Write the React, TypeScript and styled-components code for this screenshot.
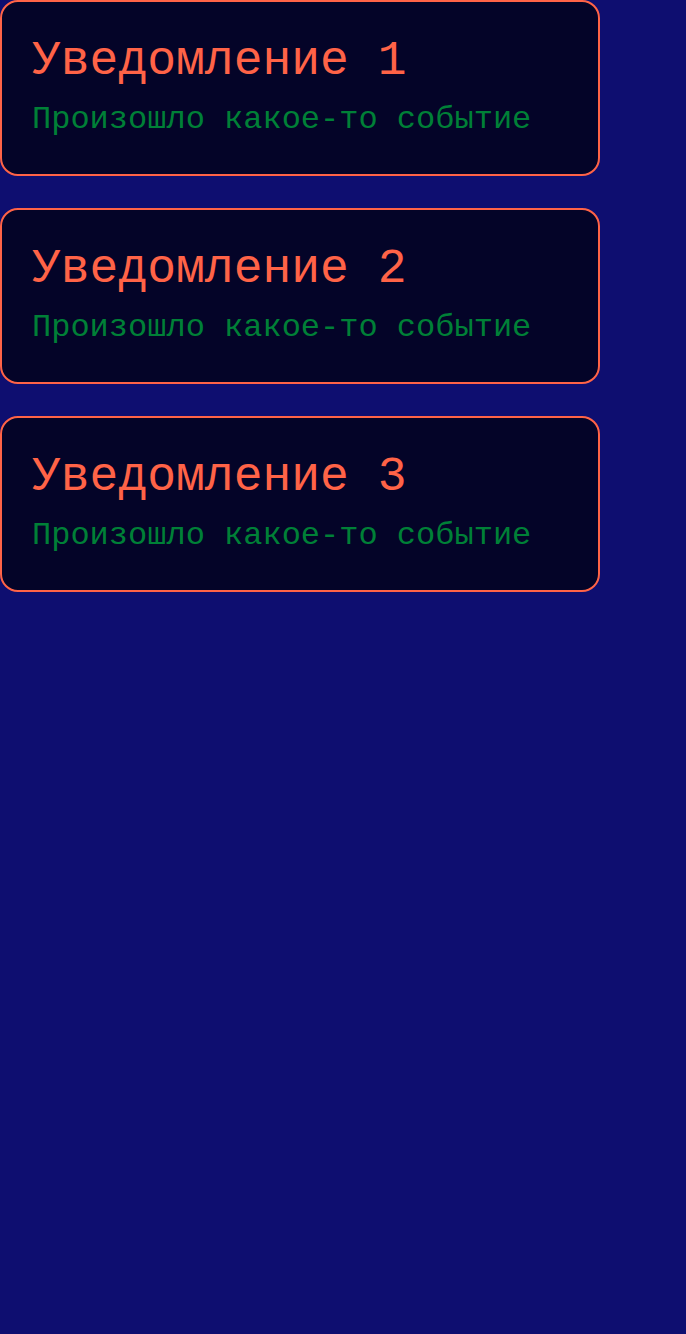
import React from 'react';
import styled, {createGlobalStyle} from "styled-components";

const notifications = [
    {id: 1, title: 'Уведомление 1', text: 'Произошло какое-то событие'},
    {id: 2, title: 'Уведомление 2', text: 'Произошло какое-то событие'},
    {id: 3, title: 'Уведомление 3', text: 'Произошло какое-то событие'},
];

const GlobalStyle = createGlobalStyle`
    html, body {
        margin: 0;
        padding: 0;
        min-height: 100%;
        background-color: rgb(14, 14, 112);
    }
    body {
        font-family: "Liberation Mono", "Courier New", monospace;
    }
`;

export default function App() {
    return (
        <>
            <GlobalStyle/>
            <NotificationsList>
                {notifications.map((item) => (
                    <Card key={item.id}>
                        <Title>{item.title}</Title>
                        <Text>{item.text}</Text>
                    </Card>
                ))}
            </NotificationsList>
        </>
    );
}

const NotificationsList = styled.div`
    display: flex;
    flex-direction: column;
    gap: 32px;
    min-height: 1334px;
`;

const Card = styled.div`
    box-sizing: border-box;
    width: 600px;
    padding: 32px 30px 36px;
    border: 2px solid rgb(255, 99, 71);
    border-radius: 18px;
    background-color: rgb(4, 4, 40);
`;

const Title = styled.h2`
    margin: 0 0 13px;
    color: rgb(255, 99, 71);
    font-size: 48px;
    font-weight: 400;
`;

const Text = styled.p`
    margin: 0;
    color: rgb(0, 128, 55);
    font-size: 32px;
`;
